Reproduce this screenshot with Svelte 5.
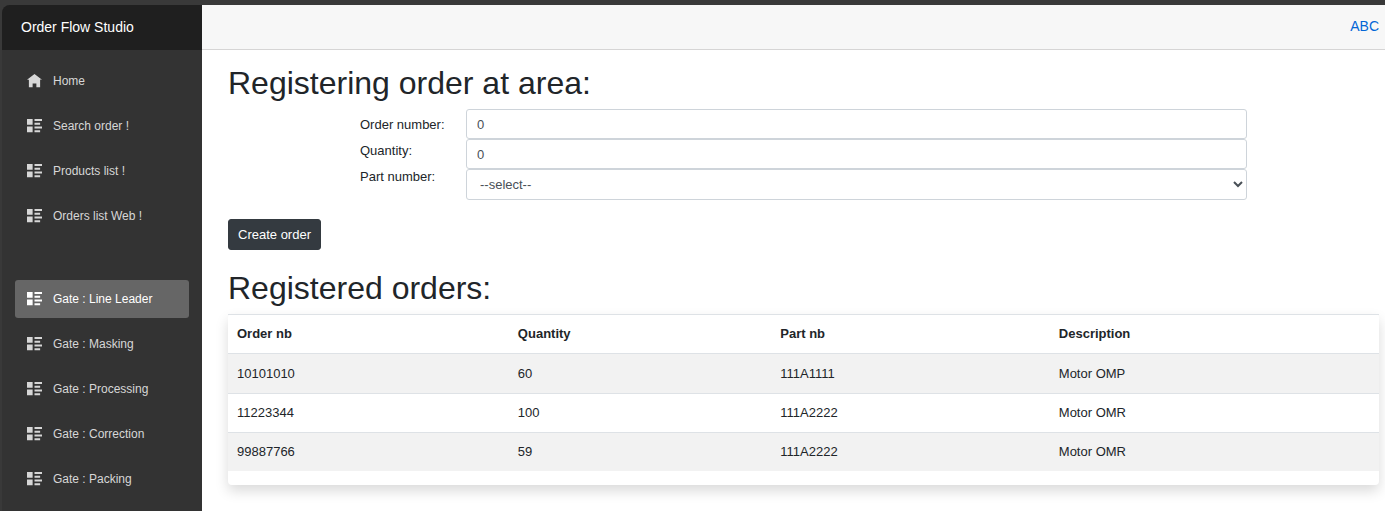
<script>
  const mainLinks = [
    { label: 'Home', icon: 'home' },
    { label: 'Search order !' },
    { label: 'Products list !' },
    { label: 'Orders list Web !' }
  ];
  const gateLinks = [
    { label: 'Gate : Line Leader', active: true },
    { label: 'Gate : Masking' },
    { label: 'Gate : Processing' },
    { label: 'Gate : Correction' },
    { label: 'Gate : Packing' }
  ];
  const orders = [
    { nb: '10101010', quantity: 60, part: '111A1111', description: 'Motor OMP' },
    { nb: '11223344', quantity: 100, part: '111A2222', description: 'Motor OMR' },
    { nb: '99887766', quantity: 59, part: '111A2222', description: 'Motor OMR' }
  ];
  let orderNumber = $state('0');
  let quantity = $state('0');
  let part = $state('');
</script>

{#snippet navList(links)}
  <ul>
    {#each links as link}
      <li>
        <a href="#top" class:active={link.active}>
          <svg viewBox="0 0 8 8" aria-hidden="true">
            {#if link.icon === 'home'}
              <path d="M4 0l-4 3h1v4h2v-2h2v2h2v-4.03l1 .03-4-3z" />
            {:else}
              <path d="M0 0v3h3v-3h-3zm4 0v1h4v-1h-4zm0 2v1h3v-1h-3zm-4 2v3h3v-3h-3zm4 0v1h4v-1h-4zm0 2v1h3v-1h-3z" />
            {/if}
          </svg>
          {link.label}
        </a>
      </li>
    {/each}
  </ul>
{/snippet}

<div class="page">
  <aside>
    <a class="brand" href="#top">Order Flow Studio</a>
    <nav>
      {@render navList(mainLinks)}
      {@render navList(gateLinks)}
    </nav>
  </aside>
  <div class="body">
    <header><a href="#top">ABC</a></header>
    <main>
      <h1>Registering order at area:</h1>
      <form onsubmit={(e) => e.preventDefault()}>
        <div class="fields">
          <div class="labels">
            <label for="order-number">Order number:</label>
            <label for="quantity">Quantity:</label>
            <label for="part">Part number:</label>
          </div>
          <div class="inputs">
            <input id="order-number" type="text" bind:value={orderNumber} />
            <input id="quantity" type="text" bind:value={quantity} />
            <select id="part" bind:value={part}>
              <option value="">--select--</option>
              <option>111A1111</option>
              <option>111A2222</option>
            </select>
          </div>
        </div>
        <button type="submit">Create order</button>
      </form>
      <h1>Registered orders:</h1>
      <div class="card">
        <table>
          <thead>
            <tr><th>Order nb</th><th>Quantity</th><th>Part nb</th><th>Description</th></tr>
          </thead>
          <tbody>
            {#each orders as order}
              <tr>
                <td>{order.nb}</td>
                <td>{order.quantity}</td>
                <td>{order.part}</td>
                <td>{order.description}</td>
              </tr>
            {/each}
          </tbody>
        </table>
      </div>
    </main>
  </div>
</div>

<style>
  :global(body) {
    margin: 0;
    background: #393939;
  }
  .page,
  .page * {
    box-sizing: border-box;
  }
  .page {
    display: flex;
    min-height: 100vh;
    padding: 5px 0 0 2px;
    font: 13px/20px "Liberation Sans", Arial, sans-serif;
    color: #212529;
  }
  aside {
    flex: 0 0 200px;
    background: #333;
    border-radius: 8px 0 0 0;
    overflow: hidden;
  }
  .brand {
    display: flex;
    align-items: center;
    height: 45px;
    padding: 0 19px 2px;
    background: #1f1f1f;
    color: #fff;
    font-size: 14px;
    text-decoration: none;
  }
  nav {
    display: flex;
    flex-direction: column;
    gap: 45px;
    padding: 12px 13px;
  }
  ul {
    display: flex;
    flex-direction: column;
    gap: 7px;
    margin: 0;
    padding: 0;
    list-style: none;
  }
  li a {
    display: flex;
    align-items: center;
    gap: 11px;
    height: 38px;
    padding: 0 12px;
    border-radius: 3px;
    color: #d7d7d7;
    font-size: 12px;
    text-decoration: none;
  }
  li a.active {
    background: #666;
    color: #fff;
  }
  li svg {
    width: 15px;
    height: 15px;
    fill: currentColor;
  }
  .body {
    flex: 1;
    min-width: 0;
    background: #fff;
  }
  header {
    display: flex;
    align-items: center;
    justify-content: flex-end;
    height: 45px;
    padding: 0 6px 2px;
    border-bottom: 1px solid #d6d5d5;
    background: #f7f7f7;
  }
  header a {
    color: #0366d6;
    font-size: 14px;
    text-decoration: none;
  }
  main {
    padding: 14px 6px 26px 26px;
  }
  h1 {
    margin: 0 0 7px;
    font-size: 32px;
    line-height: 38px;
    font-weight: 400;
  }
  .fields {
    display: flex;
    padding: 0 132px;
  }
  .labels {
    display: flex;
    flex-direction: column;
    flex: 0 0 106px;
    padding-top: 3px;
    line-height: 26px;
  }
  .inputs {
    display: flex;
    flex-direction: column;
    flex: 1;
  }
  input,
  select {
    width: 100%;
    height: 30px;
    padding: 0 10px;
    border: 1px solid #ced4da;
    border-radius: 3px;
    background: #fff;
    color: #495057;
    font: inherit;
  }
  select {
    height: 31px;
    padding: 0 0 0 9px;
  }
  button {
    display: block;
    height: 31px;
    margin: 19px 0;
    padding: 0 9px;
    border: 1px solid #343a40;
    border-radius: 3px;
    background: #343a40;
    color: #fff;
    font: inherit;
  }
  .card {
    padding-bottom: 14px;
    border-radius: 4px;
    box-shadow: 0 6px 13px rgba(0, 0, 0, 0.15);
  }
  table {
    width: 100%;
    table-layout: fixed;
    border-spacing: 0;
  }
  th,
  td {
    padding: 9px;
    border-top: 1px solid #dee2e6;
    text-align: left;
  }
  th {
    border-bottom: 1px solid #dee2e6;
  }
  th:nth-child(1) {
    width: 24.4%;
  }
  th:nth-child(2) {
    width: 22.8%;
  }
  th:nth-child(3) {
    width: 24.2%;
  }
  tbody tr:nth-child(odd) {
    background: #f2f2f2;
  }
  tbody tr:first-child td {
    border-top-color: transparent;
  }
</style>
